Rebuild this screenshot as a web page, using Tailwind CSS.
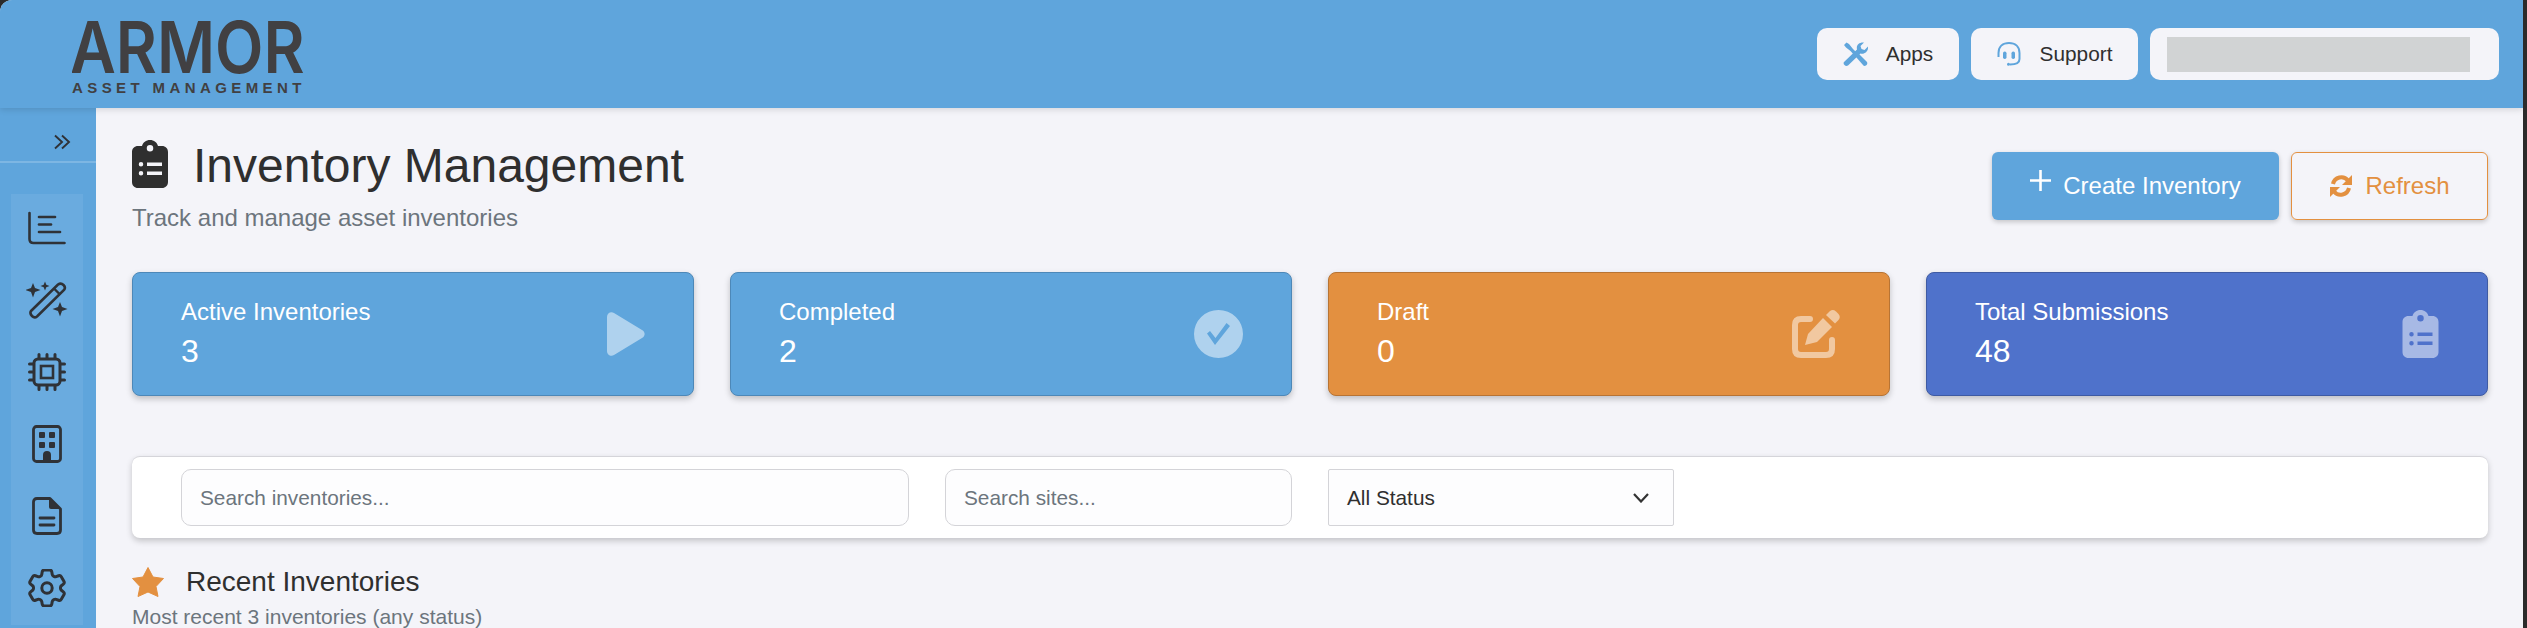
<!DOCTYPE html>
<html lang="en">
<head>
    <meta charset="UTF-8">
    <title>Inventory Management</title>
    <script src="https://cdn.jsdelivr.net/npm/@tailwindcss/browser@4"></script>
</head>
<body class="h-[628px] overflow-hidden bg-[#2b2b2b] font-['Liberation_Sans',Arial,sans-serif] text-[#2f2f2f]">
<div class="w-[2523px] h-[628px] bg-[#f4f4f9] rounded-tl-[12px] overflow-hidden">

    <!-- header -->
    <header class="h-[108px] bg-[#5fa5dc] flex items-center justify-between pl-[72px] pr-[24px] shadow-[0_2px_6px_rgba(0,0,0,0.12)] relative z-10">
        <div class="w-[232px] self-start text-[#414042]">
            <svg class="block -mb-[17px]" width="240" height="90" viewBox="0 0 240 90">
                <text x="-2" y="63.900" transform="scale(1 1.143)" font-size="63" font-weight="600" fill="#414042" class="font-['Inter']">ARMOR</text>
            </svg>
            <div class="mt-[8px] text-[15px] leading-[13px] font-bold tracking-[4.4px] whitespace-nowrap">ASSET MANAGEMENT</div>
        </div>
        <div class="flex items-center gap-[12px] text-[20.8px]">
            <a class="w-[142px] h-[52px] bg-[#f4f4f9] rounded-[10px] flex items-center justify-center gap-[18px]">
                <svg class="w-[25px] h-[24px] text-[#5fa5dc]" viewBox="0 0 25 24" fill="currentColor">
                    <path d="M1 3 L3.500 0.500 L6 2 L10 7 L14 11 L11.500 13.500 L7.500 9 L3 5.500 Z"/>
                    <path d="M13 15 L16 12 L24 20 Q25 22 23 23.500 Q21 24.500 20 23 Z"/>
                    <path d="M1 20 L14 7.500 C13 3 16 0 21 0.500 L17.500 4 L18.500 7 L21.500 8 L25 4.500 C25.500 9 22 12.500 17.500 11.500 L5 23.500 Q3 24.500 1.500 23 Q0 21.500 1 20 Z"/>
                </svg>
                <span>Apps</span>
            </a>
            <a class="w-[167px] h-[52px] bg-[#f4f4f9] rounded-[10px] flex items-center justify-center gap-[19px]">
                <svg class="w-[24px] h-[24px] text-[#5fa5dc]" viewBox="0 0 24 24" fill="none" stroke="currentColor" stroke-width="2">
                    <path d="M1.500 15 V11 C1.500 4.500 6 1 12 1 C18 1 22.500 4.500 22.500 11 V17 C22.500 20.500 19 22.500 13 22.500"/>
                    <rect x="6" y="9.500" width="3.500" height="7.500" rx="1.700" fill="currentColor" stroke="none"/>
                    <rect x="14.500" y="9.500" width="3.500" height="7.500" rx="1.700" fill="currentColor" stroke="none"/>
                    <circle cx="11.500" cy="22.300" r="1.500" fill="currentColor" stroke="none"/>
                </svg>
                <span>Support</span>
            </a>
            <div class="w-[349px] h-[52px] bg-[#f4f4f9] rounded-[10px] flex items-center pl-[17px]">
                <div class="w-[303px] h-[35px] bg-[#d1d3d4]"></div>
            </div>
        </div>
    </header>

    <div class="flex h-[520px]">
        <!-- sidebar -->
        <aside class="w-[96px] bg-[#5fa5dc] shrink-0">
            <div class="h-[55px] pt-[14px] border-b-2 border-[#7db6e3] flex items-center justify-end pr-[25px]">
                <svg class="w-[17px] h-[16px] text-[#2f3237]" viewBox="0 0 17 16" fill="none" stroke="currentColor" stroke-width="1.900">
                    <path d="M1 1.500 L8 8 L1 14.500"/><path d="M8 1.500 L15 8 L8 14.500"/>
                </svg>
            </div>
            <nav class="mx-[11px] mt-[31px] w-[72px] h-[431px] bg-[#6aabdf] flex flex-col items-center pt-[15px] gap-[34px] text-[#2f3237]">
                <svg class="w-[38px] h-[38px] shrink-0" viewBox="0 0 38 38" fill="none" stroke="currentColor" stroke-width="2.600" stroke-linecap="round">
                    <path d="M1.500 4 V30 Q1.500 34 5.500 34 H36.500"/>
                    <path d="M11 8 H27"/><path d="M11 15.500 H23"/><path d="M11 23 H32"/>
                </svg>
                <svg class="w-[42px] h-[38px] shrink-0" viewBox="0 0 42 38" fill="currentColor">
                    <path d="M5 30 L32 3.500 Q35 1.500 37.500 4 Q40 6.500 38 9 L11 35.500 Q8.500 37.500 6 35 Q3.500 32.500 5 30 Z" fill="none" stroke="currentColor" stroke-width="2.600"/>
                    <path d="M28 7.500 L34 13.500" stroke="currentColor" stroke-width="2.400"/>
                    <path d="M7 2 L9 7 L14.500 9 L9 11 L7 16.500 L5 11 L-0.500 9 L5 7 Z"/>
                    <path d="M19 0.500 L20.300 3.700 L23.500 5 L20.300 6.300 L19 9.500 L17.700 6.300 L14.500 5 L17.700 3.700 Z"/>
                    <path d="M34 21 L36 26 L41.500 28 L36 30 L34 35.500 L32 30 L26.500 28 L32 26 Z"/>
                </svg>
                <svg class="w-[38px] h-[38px] shrink-0" viewBox="0 0 38 38" fill="none" stroke="currentColor" stroke-width="3" stroke-linecap="round">
                    <rect x="6" y="6" width="26" height="26" rx="4"/>
                    <rect x="13" y="13" width="12" height="12" stroke-width="2.600"/>
                    <path d="M11 1.500 V5 M19 1.500 V5 M27 1.500 V5 M11 33 V36.500 M19 33 V36.500 M27 33 V36.500 M1.500 11 H5 M1.500 19 H5 M1.500 27 H5 M33 11 H36.500 M33 19 H36.500 M33 27 H36.500"/>
                </svg>
                <svg class="w-[30px] h-[38px] shrink-0" viewBox="0 0 30 38" fill="currentColor">
                    <rect x="1.500" y="1.500" width="27" height="35" rx="3" fill="none" stroke="currentColor" stroke-width="2.800"/>
                    <rect x="7" y="7" width="6" height="6" rx="1"/><rect x="17" y="7" width="6" height="6" rx="1"/>
                    <rect x="7" y="17" width="6" height="6" rx="1"/><rect x="17" y="17" width="6" height="6" rx="1"/>
                    <path d="M11 36 V30 A4 4 0 0 1 19 30 V36 Z"/>
                </svg>
                <svg class="w-[30px] h-[38px] shrink-0" viewBox="0 0 30 38" fill="none" stroke="currentColor" stroke-width="2.800">
                    <path d="M18 1.500 H5 Q1.500 1.500 1.500 5 V33 Q1.500 36.500 5 36.500 H25 Q28.500 36.500 28.500 33 V12 Z" stroke-linejoin="round"/>
                    <path d="M17 1 L29 12 H19 Q17 12 17 10 Z" fill="currentColor" stroke="none"/>
                    <path d="M8 21 H22 M8 28 H22" stroke-linecap="round"/>
                </svg>
                <svg class="w-[38px] h-[38px] shrink-0" viewBox="2.500 2.500 19 19" fill="none" stroke="currentColor" stroke-width="1.500">
                    <path d="M9.594 3.94c.09-.542.56-.94 1.11-.94h2.593c.55 0 1.02.398 1.11.94l.213 1.281c.063.374.313.686.645.87.074.04.147.083.22.127.325.196.72.257 1.075.124l1.217-.456a1.125 1.125 0 0 1 1.37.49l1.296 2.247a1.125 1.125 0 0 1-.26 1.431l-1.003.827c-.293.241-.438.613-.43.992a7.723 7.723 0 0 1 0 .255c-.008.378.137.75.43.991l1.004.827c.424.35.534.955.26 1.43l-1.298 2.247a1.125 1.125 0 0 1-1.369.491l-1.217-.456c-.355-.133-.75-.072-1.076.124a6.47 6.47 0 0 1-.22.128c-.331.183-.581.495-.644.869l-.213 1.281c-.09.543-.56.94-1.11.94h-2.594c-.55 0-1.019-.398-1.11-.94l-.213-1.281c-.062-.374-.312-.686-.644-.87a6.52 6.52 0 0 1-.22-.127c-.325-.196-.72-.257-1.076-.124l-1.217.456a1.125 1.125 0 0 1-1.369-.49l-1.297-2.247a1.125 1.125 0 0 1 .26-1.431l1.004-.827c.292-.24.437-.613.43-.991a6.932 6.932 0 0 1 0-.255c.007-.38-.138-.751-.43-.992l-1.004-.827a1.125 1.125 0 0 1-.26-1.43l1.297-2.247a1.125 1.125 0 0 1 1.37-.491l1.216.456c.356.133.751.072 1.076-.124.072-.044.146-.086.22-.128.332-.183.582-.495.644-.869l.214-1.28Z"/>
                    <circle cx="12" cy="12" r="2.600"/>
                </svg>
            </nav>
        </aside>

        <!-- main content -->
        <main class="flex-1 pl-[36px] pr-[35px] pt-[29px] overflow-hidden">
            <div class="flex justify-between items-start">
                <div>
                    <div class="flex items-center gap-[25px] h-[58px]">
                        <svg class="w-[36px] h-[48px] -mt-[4px] text-[#2f2f2f]" viewBox="0 0 36 48" fill="currentColor">
                            <path fill-rule="evenodd" d="M18 0 C22 0 25 2.500 26 6 H30 C33.500 6 36 8.500 36 12 V42 C36 45.500 33.500 48 30 48 H6 C2.500 48 0 45.500 0 42 V12 C0 8.500 2.500 6 6 6 H10 C11 2.500 14 0 18 0 Z M18 5 A3.200 3.200 0 1 0 18 11.500 A3.200 3.200 0 1 0 18 5 Z M9 22 A2.200 2.200 0 1 0 9 26.500 A2.200 2.200 0 1 0 9 22 Z M9 31 A2.200 2.200 0 1 0 9 35.500 A2.200 2.200 0 1 0 9 31 Z M15 22.500 V26 H30 V22.500 Z M15 31.500 V35 H30 V31.500 Z"/>
                        </svg>
                        <h1 class="text-[48px] leading-[58px] font-normal whitespace-nowrap">Inventory Management</h1>
                    </div>
                    <p class="mt-[9px] text-[24px] leading-[28px] text-[#6c757d]">Track and manage asset inventories</p>
                </div>
                <div class="flex gap-[12px] mt-[15px]">
                    <button class="w-[287px] h-[68px] bg-[#5fa5dc] text-white rounded-[6px] flex items-center justify-center gap-[12px] text-[24px] shadow-[0_2px_5px_rgba(0,0,0,0.2)]">
                        <svg class="w-[21px] h-[21px] -mt-[12px]" viewBox="0 0 21 21" fill="none" stroke="currentColor" stroke-width="2.600"><path d="M10.500 0 V21 M0 10.500 H21"/></svg>
                        Create Inventory
                    </button>
                    <button class="w-[197px] h-[68px] border border-[#e39040] text-[#e39040] rounded-[6px] flex items-center justify-center gap-[12px] text-[24px] shadow-[0_2px_5px_rgba(0,0,0,0.2)]">
                        <svg class="w-[24px] h-[24px]" viewBox="0 0 24 24" fill="none" stroke="currentColor" stroke-width="4"><path d="M4 10 A8.500 8.500 0 0 1 19 6.500"/><path d="M20 14 A8.500 8.500 0 0 1 5 17.500"/><path d="M23 1 V11 H13 Z" fill="currentColor" stroke="none"/><path d="M1 23 V13 H11 Z" fill="currentColor" stroke="none"/></svg>
                        Refresh
                    </button>
                </div>
            </div>

            <!-- stat cards -->
            <div class="grid grid-cols-4 gap-[36px] mt-[40px]">
                <div class="h-[124px] rounded-[8px] bg-[#5fa5dc] border border-[#4d88b8] text-white flex items-center justify-between pl-[48px] pr-[48px] shadow-[0_3px_6px_rgba(0,0,0,0.22)]">
                    <div>
                        <div class="text-[24px] leading-[28px]">Active Inventories</div>
                        <div class="text-[32px] leading-[38px] mt-[6px]">3</div>
                    </div>
                    <svg class="w-[38px] h-[44px] text-white/50" viewBox="0 0 38 44" fill="currentColor"><path d="M0 5 C0 1 4 -1 7 1 L35 18 C38.500 20 38.500 24 35 26 L7 43 C4 45 0 43 0 39 Z"/></svg>
                </div>
                <div class="h-[124px] rounded-[8px] bg-[#5fa5dc] border border-[#4d88b8] text-white flex items-center justify-between pl-[48px] pr-[48px] shadow-[0_3px_6px_rgba(0,0,0,0.22)]">
                    <div>
                        <div class="text-[24px] leading-[28px]">Completed</div>
                        <div class="text-[32px] leading-[38px] mt-[6px]">2</div>
                    </div>
                    <svg class="w-[49px] h-[48px] text-white/50" viewBox="0 0 49 48" fill="currentColor"><path fill-rule="evenodd" d="M24.500 0 A24.500 24 0 1 1 24.500 48 A24.500 24 0 1 1 24.500 0 Z M36 16 L32.500 13 L21.500 28 L16 21 L13 23.500 L21 35 Z"/></svg>
                </div>
                <div class="h-[124px] rounded-[8px] bg-[#e39040] border border-[#b87434] text-white flex items-center justify-between pl-[48px] pr-[48px] shadow-[0_3px_6px_rgba(0,0,0,0.22)]">
                    <div>
                        <div class="text-[24px] leading-[28px]">Draft</div>
                        <div class="text-[32px] leading-[38px] mt-[6px]">0</div>
                    </div>
                    <svg class="w-[49px] h-[48px] text-white/50" viewBox="0 0 49 48" fill="none" stroke="currentColor"><path d="M18 9 H9 Q3 9 3 15 V39 Q3 45 9 45 H34 Q40 45 40 39 V30" stroke-width="6" stroke-linecap="round"/><path d="M13 35 L16 24 L31 8 L40 17 L25 32 Z" fill="currentColor" stroke="none"/><path d="M34 5 L38 1 Q41 -1 44 1.500 L46.500 4 Q49 7 46.500 10 L43 13.500 Z" fill="currentColor" stroke="none"/></svg>
                </div>
                <div class="h-[124px] rounded-[8px] bg-[#4f72cb] border border-[#3f5ba3] text-white flex items-center justify-between pl-[48px] pr-[48px] shadow-[0_3px_6px_rgba(0,0,0,0.22)]">
                    <div>
                        <div class="text-[24px] leading-[28px]">Total Submissions</div>
                        <div class="text-[32px] leading-[38px] mt-[6px]">48</div>
                    </div>
                    <svg class="w-[37px] h-[48px] text-white/50" viewBox="0 0 36 48" fill="currentColor">
                        <path fill-rule="evenodd" d="M18 0 C22 0 25 2.500 26 6 H30 C33.500 6 36 8.500 36 12 V42 C36 45.500 33.500 48 30 48 H6 C2.500 48 0 45.500 0 42 V12 C0 8.500 2.500 6 6 6 H10 C11 2.500 14 0 18 0 Z M18 5 A3.200 3.200 0 1 0 18 11.500 A3.200 3.200 0 1 0 18 5 Z M9 22 A2.200 2.200 0 1 0 9 26.500 A2.200 2.200 0 1 0 9 22 Z M9 31 A2.200 2.200 0 1 0 9 35.500 A2.200 2.200 0 1 0 9 31 Z M15 22.500 V26 H30 V22.500 Z M15 31.500 V35 H30 V31.500 Z"/>
                    </svg>
                </div>
            </div>

            <!-- filters -->
            <div class="mt-[60px] h-[82px] bg-white rounded-[8px] border-t border-[#d5d5da] shadow-[0_3px_6px_rgba(0,0,0,0.2)] flex items-center pl-[49px] gap-[36px]">
                <input class="w-[728px] h-[57px] px-[18px] bg-[#fdfdfe] border border-[#d4d4d8] rounded-[10px] text-[20.8px] placeholder:text-[#6c757d]" placeholder="Search inventories...">
                <input class="w-[347px] h-[57px] px-[18px] bg-[#fdfdfe] border border-[#d4d4d8] rounded-[10px] text-[20.8px] placeholder:text-[#6c757d]" placeholder="Search sites...">
                <div class="w-[346px] h-[57px] pl-[18px] pr-[24px] bg-[#fdfdfe] border border-[#d4d4d8] rounded-[2px] text-[20.8px] flex items-center justify-between">
                    <span>All Status</span>
                    <svg class="w-[16px] h-[10px] text-[#333]" viewBox="0 0 16 10" fill="none" stroke="currentColor" stroke-width="2.200"><path d="M1 1 L8 8.500 L15 1"/></svg>
                </div>
            </div>

            <!-- recent -->
            <div class="mt-[28px] flex items-center gap-[22px] h-[32px]">
                <svg class="w-[32px] h-[30px] text-[#e39040]" viewBox="0 0 32 30" fill="currentColor"><path d="M16 0.500 L21 10 L31.500 11.500 L24 19.500 L26 29.500 L16 25 L6 29.500 L8 19.500 L0.500 11.500 L11 10 Z" stroke="currentColor" stroke-width="1" stroke-linejoin="round"/></svg>
                <h2 class="text-[28px] leading-[32px] font-normal">Recent Inventories</h2>
            </div>
            <p class="mt-[9px] text-[21px] leading-[20px] text-[#6c757d]">Most recent 3 inventories (any status)</p>
        </main>
    </div>
</div>
</body>
</html>
